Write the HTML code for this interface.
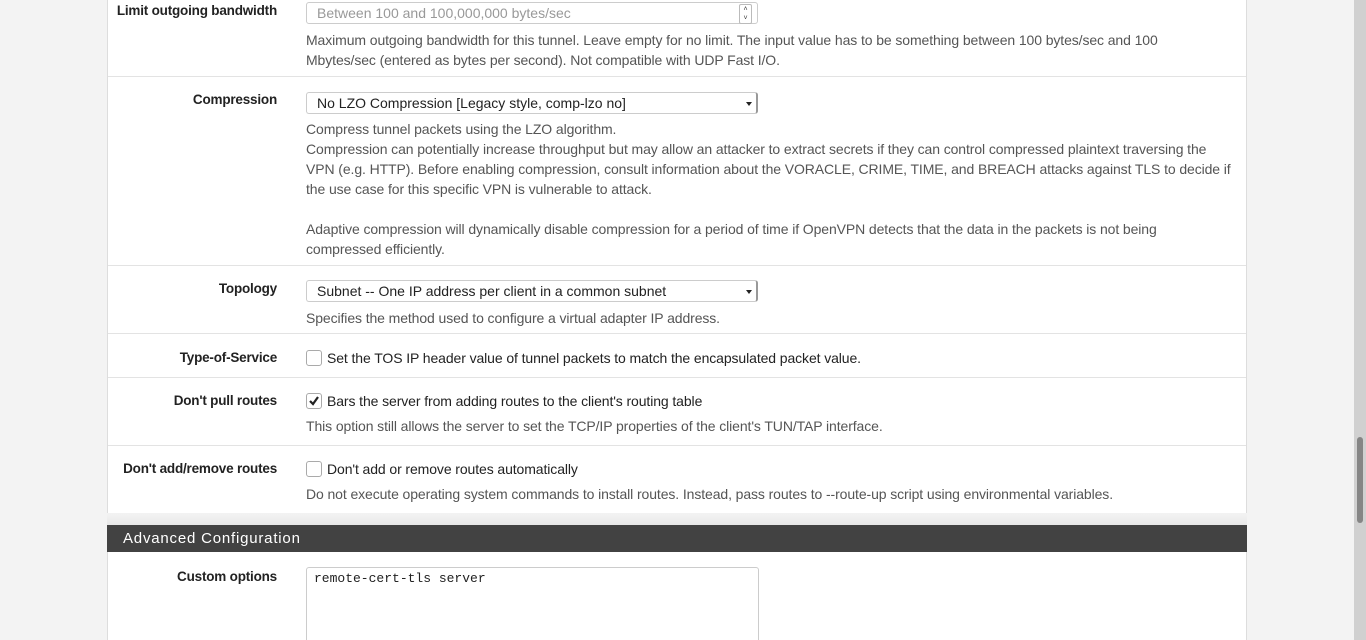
<!DOCTYPE html>
<html style="overflow:hidden;height:640px"><head><style>
body{margin:0;width:1366px;height:640px;background:#f3f3f3;font-family:"Liberation Sans",sans-serif;font-size:14px;color:#555;overflow:hidden;position:relative}
.panel{position:absolute;left:107px;width:1138px;background:#fff;border-left:1px solid #ddd;border-right:1px solid #ddd;overflow:hidden}
.row{position:absolute;left:0;width:1138px;border-bottom:1px solid #e3e3e3}
.lab{position:absolute;right:969px;font-weight:bold;color:#222;font-size:13.5px;white-space:nowrap;letter-spacing:-0.2px}
.c{position:absolute;left:198px;width:925px;line-height:20px;letter-spacing:-0.1px}
.inp{position:absolute;left:198px;width:452px;height:22px;border:1px solid #ccc;border-radius:3px;box-sizing:border-box;line-height:20px;padding-left:10px;color:#222;background:#fff}
.sel::after{content:"";position:absolute;right:4px;top:9px;border:3px solid transparent;border-top:4px solid #222}
.sel{border-right:2px solid #999}
.cb{display:inline-block;width:14px;height:14px;border:1px solid #aaa;border-radius:3px;vertical-align:-3px;margin-right:5px;position:relative;background:#fff}
.t{color:#222}
</style></head><body>
<div class="panel" style="top:0;height:513px">
 <div class="row" style="top:0;height:76px">
  <div class="lab" style="top:3px">Limit outgoing bandwidth</div>
  <div class="inp" style="top:2px;color:#999">Between 100 and 100,000,000 bytes/sec
   <div style="position:absolute;right:5px;top:1px;width:11px;height:18px;border:1px solid #bbb;border-radius:2px;font-size:7px;line-height:9px;text-align:center;color:#333">˄<br>˅</div></div>
  <div class="c" style="top:30px">Maximum outgoing bandwidth for this tunnel. Leave empty for no limit. The input value has to be something between 100 bytes/sec and 100 Mbytes/sec (entered as bytes per second). Not compatible with UDP Fast I/O.</div>
 </div>
 <div class="row" style="top:77px;height:188px">
  <div class="lab" style="top:15px">Compression</div>
  <div class="inp sel" style="top:15px">No LZO Compression [Legacy style, comp-lzo no]</div>
  <div class="c" style="top:42px">Compress tunnel packets using the LZO algorithm.<br>Compression can potentially increase throughput but may allow an attacker to extract secrets if they can control compressed plaintext traversing the VPN (e.g. HTTP). Before enabling compression, consult information about the VORACLE, CRIME, TIME, and BREACH attacks against TLS to decide if the use case for this specific VPN is vulnerable to attack.<br><br>Adaptive compression will dynamically disable compression for a period of time if OpenVPN detects that the data in the packets is not being compressed efficiently.</div>
 </div>
 <div class="row" style="top:266px;height:67px">
  <div class="lab" style="top:15px">Topology</div>
  <div class="inp sel" style="top:14px">Subnet -- One IP address per client in a common subnet</div>
  <div class="c" style="top:42px">Specifies the method used to configure a virtual adapter IP address.</div>
 </div>
 <div class="row" style="top:334px;height:43px">
  <div class="lab" style="top:16px">Type-of-Service</div>
  <div class="c t" style="top:14px"><span class="cb"></span>Set the TOS IP header value of tunnel packets to match the encapsulated packet value.</div>
 </div>
 <div class="row" style="top:378px;height:67px">
  <div class="lab" style="top:15px">Don't pull routes</div>
  <div class="c t" style="top:13px"><span class="cb"><svg width="14" height="14" style="position:absolute;left:0;top:0"><path d="M3 7 L6 10 L11 3" stroke="#222" stroke-width="2.2" fill="none"/></svg></span>Bars the server from adding routes to the client's routing table</div>
  <div class="c" style="top:38px">This option still allows the server to set the TCP/IP properties of the client's TUN/TAP interface.</div>
 </div>
 <div class="row" style="top:446px;height:67px;border-bottom:none">
  <div class="lab" style="top:15px">Don't add/remove routes</div>
  <div class="c t" style="top:13px"><span class="cb"></span>Don't add or remove routes automatically</div>
  <div class="c" style="top:38px">Do not execute operating system commands to install routes. Instead, pass routes to --route-up script using environmental variables.</div>
 </div>
</div>
<div style="position:absolute;left:107px;top:513px;width:1140px;height:12px;background:linear-gradient(#f3f3f3,#e8e8e8)"></div>
<div style="position:absolute;left:107px;top:525px;width:1140px;height:27px;background:#424242;color:#fff;font-size:15px;line-height:27px;padding-left:16px;box-sizing:border-box;letter-spacing:0.8px">Advanced Configuration</div>
<div class="panel" style="top:552px;height:88px">
 <div class="lab" style="top:17px">Custom options</div>
 <div style="position:absolute;left:198px;top:15px;width:453px;height:90px;border:1px solid #ccc;border-radius:3px;box-sizing:border-box;font-family:'Liberation Mono',monospace;font-size:13px;color:#222;padding:3px 7px">remote-cert-tls server</div>
</div>
<div style="position:absolute;left:1354px;top:0;width:12px;height:640px;background:#d0d0d0"></div>
<div style="position:absolute;left:1357px;top:437px;width:6px;height:86px;background:#858585;border-radius:3px"></div>
</body></html>
